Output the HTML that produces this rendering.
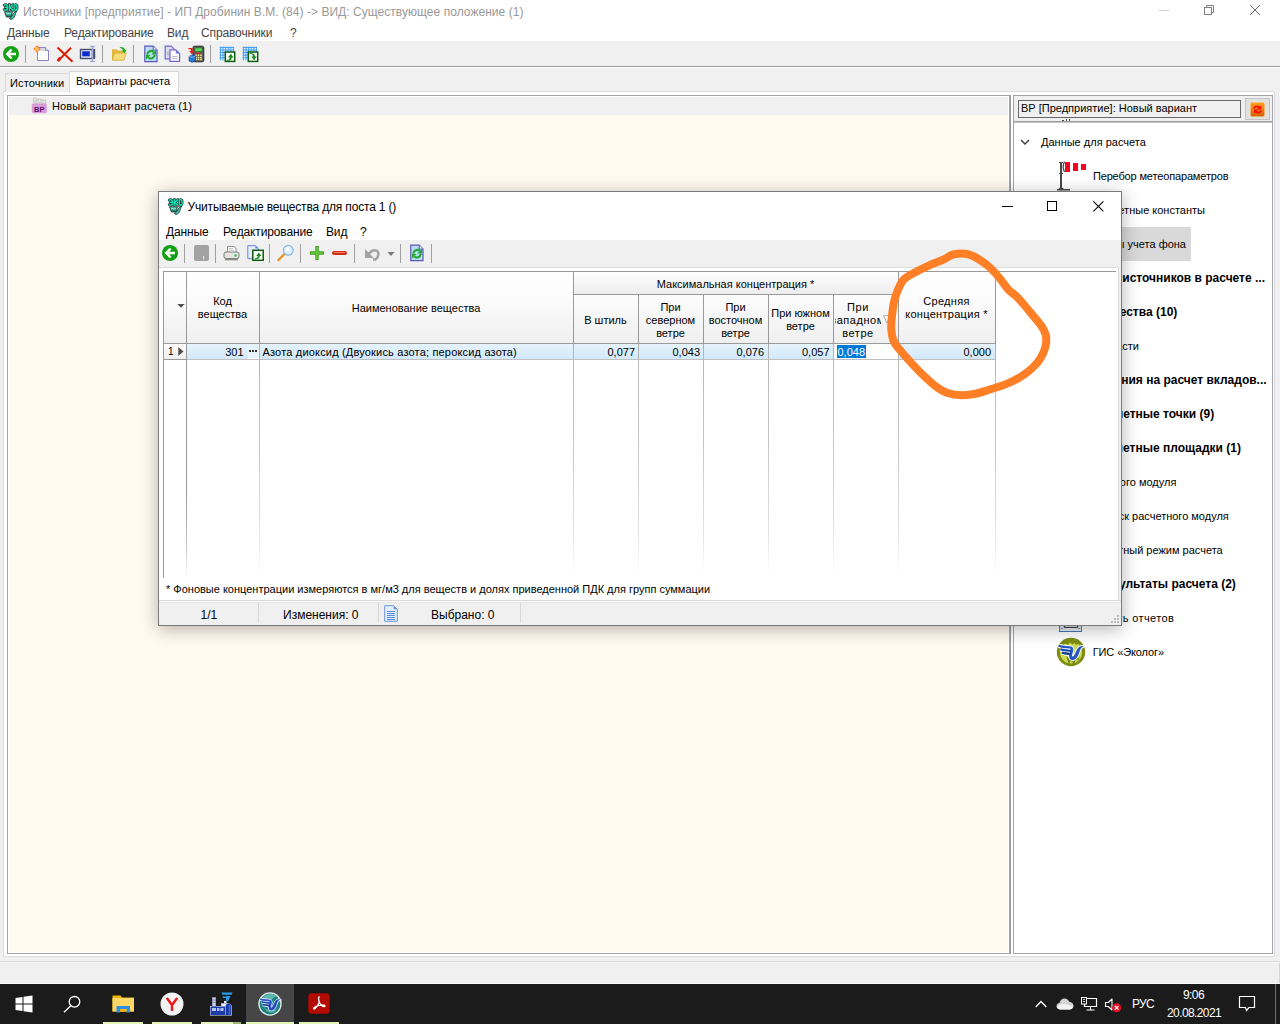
<!DOCTYPE html>
<html><head><meta charset="utf-8">
<style>
html,body{margin:0;padding:0}
body{width:1280px;height:1024px;position:relative;overflow:hidden;background:#f0f0f0;font-family:"Liberation Sans",sans-serif;font-size:11px;color:#000}
.a{position:absolute}
.t{position:absolute;white-space:nowrap;line-height:14px}
.sep{position:absolute;width:1px;background:#a0a0a0}
.b{font-weight:bold;font-size:12px}
</style></head><body>

<!-- ===== main window title + menu ===== -->
<div class="a" id="titlebar" style="left:0;top:0;width:1280px;height:41px;background:#fff"></div>
<div class="t" id="mt" style="letter-spacing:.04px;left:23px;top:4px;font-size:12px;line-height:16px;color:#999">Источники [предприятие] - ИП Дробинин В.М. (84) -&gt; ВИД: Существующее положение (1)</div>
<div class="t" id="mm1" style="letter-spacing:-.13px;left:7px;top:25px;font-size:12px;line-height:16px;color:#444">Данные</div>
<div class="t" id="mm2" style="letter-spacing:-.13px;left:64px;top:25px;font-size:12px;line-height:16px;color:#444">Редактирование</div>
<div class="t" id="mm3" style="letter-spacing:-.13px;left:167px;top:25px;font-size:12px;line-height:16px;color:#444">Вид</div>
<div class="t" id="mm4" style="letter-spacing:-.13px;left:201px;top:25px;font-size:12px;line-height:16px;color:#444">Справочники</div>
<div class="t" id="mm5" style="left:290px;top:25px;font-size:12px;line-height:16px;color:#444">?</div>


<!-- app icon -->
<svg class="a" id="appicon" style="left:2px;top:3px;overflow:visible" width="16" height="16" viewBox="0 0 16 16">
<defs><linearGradient id="cupg" x1="0" y1="0" x2="0" y2="1"><stop offset="0" stop-color="#58e4c8"/><stop offset="1" stop-color="#10705c"/></linearGradient></defs>
<path d="M2.600 8.800h7.800l-1.400 5.200H4.400z" fill="url(#cupg)" stroke="#24302e" stroke-width=".9" stroke-linejoin="round"/><path d="M4 10.700h4.800" stroke="#b8fcec" stroke-width=".7"/>
<path d="M7.400 15.400c3.200-.4 3-6 7.200-7.400-1.400 2.400-1.600 7.800-5.600 8.400z" fill="#30d4b0" stroke="#24302e" stroke-width=".9" stroke-linejoin="round"/>
<g fill="none" stroke-linecap="round" stroke-linejoin="round"><path d="M2.200 2.300C3.400 1 5.600 1.600 5.600 4.400 5.600 7.200 3.400 7.800 2.200 6.500M3.600 4.400H5.600M7.400 1.500V7.300M10.800 1.500L7.800 4.400 10.900 7.300" stroke="#24302e" stroke-width="2.800"/><ellipse cx="13.600" cy="4.400" rx="1.500" ry="2.800" stroke="#24302e" stroke-width="2.800"/><path d="M2.200 2.300C3.400 1 5.600 1.600 5.600 4.400 5.600 7.200 3.400 7.800 2.200 6.500M3.600 4.400H5.600M7.400 1.500V7.300M10.800 1.500L7.800 4.400 10.900 7.300" stroke="#14e8b8" stroke-width="1.350"/><ellipse cx="13.600" cy="4.400" rx="1.500" ry="2.800" stroke="#14e8b8" stroke-width="1.350"/></g>
</svg>
<!-- window controls -->
<div class="a" style="left:1159px;top:10px;width:10px;height:1px;background:#d4d4d4"></div>
<svg class="a" style="left:1203px;top:4px" width="12" height="12" viewBox="0 0 12 12" fill="none" stroke="#808080" stroke-width="1"><rect x="1.5" y="3.5" width="7" height="7"/><path d="M3.5 3.5v-2h7v7h-2"/></svg>
<svg class="a" style="left:1249px;top:4px" width="12" height="12" viewBox="0 0 12 12" fill="none" stroke="#6a6a6a" stroke-width="1"><path d="M1 1l10 10M11 1L1 11"/></svg>

<!-- toolbar separators -->
<div class="sep" style="left:25px;top:45px;height:18px"></div>
<div class="sep" style="left:102px;top:45px;height:18px"></div>
<div class="sep" style="left:133px;top:45px;height:18px"></div>
<div class="sep" style="left:210px;top:45px;height:18px"></div>

<!-- back -->
<svg class="a" style="left:3px;top:46px" width="16" height="16" viewBox="0 0 16 16"><circle cx="8" cy="8" r="8" fill="#14a014"/><path d="M8.6 3.6L4.2 8l4.4 4.4M4.6 8H13" fill="none" stroke="#fff" stroke-width="2.3"/></svg>
<!-- new doc -->
<svg class="a" style="left:33px;top:45px" width="17" height="17" viewBox="0 0 17 17"><path d="M4.5 2.5h8l3 3v10h-11z" fill="#fff" stroke="#8a86c8"/><path d="M5 3h7.4v3H5z" fill="#d8d8e0"/><path d="M12.5 2.5v3h3" fill="#eef" stroke="#8a86c8"/><path d="M4 .8v6.4M.8 4h6.4" stroke="#ff8a1c" stroke-width="2.6"/><path d="M4 2v4M2 4h4" stroke="#ffd9a8" stroke-width=".9"/></svg>
<!-- red X -->
<svg class="a" style="left:56px;top:46px" width="18" height="17" viewBox="0 0 18 17"><path d="M1.5 1.5L16.5 15.8M15 1.8L2.2 14.6" stroke="#e01c00" stroke-width="2" fill="none"/><path d="M4.4 11.6L1.8 15.2" stroke="#e01c00" stroke-width="3"/></svg>
<!-- rename -->
<svg class="a" style="left:79px;top:45px" width="18" height="18" viewBox="0 0 18 18"><rect x="1.5" y="4.5" width="12" height="9" fill="#dfe3ee" stroke="#44506e" stroke-width="1.4"/><rect x="3.2" y="6.3" width="7.6" height="5" fill="#0a2ccc"/><rect x="13.6" y="4" width="2.6" height="10" fill="#49506a"/><path d="M11.2 1.4h1.6l.7 1 .7-1h1.6M13.5 2v14M11.2 16.6h1.6l.7-1 .7 1h1.6" fill="none" stroke="#a0a6d8" stroke-width="1.5"/></svg>
<!-- folder open -->
<svg class="a" style="left:111px;top:46px" width="17" height="16" viewBox="0 0 17 16"><path d="M1 3.2h4.6l1.2 1.4h6.4v9.6H1z" fill="#e2b93c"/><path d="M1.2 14.2L3.6 7h11.8l-2.6 7.2z" fill="#f6dd78" stroke="#d0a42c" stroke-width=".7"/><path d="M8.4 1.2c3-.8 5.2.6 5.8 2.8l1.6-.4-2 3.4-3.2-2 1.6-.4C11.6 3 10.200 2 8.4 1.200z" fill="#2aa81e"/></svg>
<!-- refresh doc -->
<svg class="a" style="left:144px;top:45px" width="14" height="18" viewBox="0 0 14 18"><path d="M.8 1.2h8.4l3.8 3.8v11.600H.8z" fill="#b7dcf4" stroke="#5a56b8" stroke-width="1.200"/><path d="M9.2 1.2v3.8h3.800" fill="#e8f4ff" stroke="#5a56b8"/><path d="M3.300 9.600A3.900 3.900 0 0 1 9.800 6.900" stroke="#1fa82c" stroke-width="2.100" fill="none"/><path d="M12 4.800v4.600H7.400z" fill="#1fa82c"/><path d="M10.700 9.800A3.900 3.900 0 0 1 4.200 12.500" stroke="#1fa82c" stroke-width="2.100" fill="none"/><path d="M2 14.600V10h4.600z" fill="#1fa82c"/></svg>
<!-- copy docs -->
<svg class="a" style="left:164px;top:45px" width="17" height="18" viewBox="0 0 17 18"><path d="M1.200 1.200h6l3 3v9.600h-9z" fill="#dcdcf4" stroke="#6e66c8" stroke-width="1.200"/><path d="M6 4.800h5.800l3.800 3.800v7.800H6z" fill="#fdfdff" stroke="#6e66c8" stroke-width="1.200"/><path d="M11.800 4.800v3.800h3.800z" fill="#7a72d0"/><path d="M8 11.500h5.600M8 13.500h5.600" stroke="#b4b4c4" stroke-width=".9"/><path d="M3 7.600h2M3 9.600h2" stroke="#9a9aaa" stroke-width=".9"/></svg>
<!-- calculator -->
<svg class="a" style="left:188px;top:45px" width="17" height="18" viewBox="0 0 17 18"><rect x="5" y="1.2" width="10.800" height="15.600" rx="1.600" fill="#5c5c5c" stroke="#2c2c2c"/><rect x="7" y="3" width="7" height="3.400" fill="#58dc5c" stroke="#1c7c1c" stroke-width=".6"/><path d="M7 8.400h7" stroke="#e02020" stroke-width="1.200" stroke-dasharray="2 .8"/><path d="M7.200 10.200h6.600M7.200 12.400h6.600M7.200 14.600h6.600" stroke="#f0e48c" stroke-width="1.500" stroke-dasharray="1.700 .75"/><path d="M.4 3h4.200v3h1.600L3.600 9.200 1.200 6h1.600V4.200H.4z" fill="#f01818"/><path d="M1 11.400l3.600-1.600 3 1v4.800l-3.400 1.800L1 16z" fill="#2a78d4" stroke="#123c8c" stroke-width=".6"/><path d="M1 11.400l3.200 1 3.400-1.600" fill="none" stroke="#9cc8f4" stroke-width=".7"/></svg>
<!-- grid export -->
<svg class="a" style="left:219px;top:46px" width="17" height="17" viewBox="0 0 17 17"><rect x=".8" y=".8" width="14" height="13.600" fill="#e8f4ff"/><path d="M.8 1.400h14M.8 4h14M.8 6.600h14M.8 9.200h14M.8 11.800h14M1.400.8v13.600M4 .8v13.600M6.600.8v13.600M9.200.8v13.600M11.800.8v13.600M14.400.8v13.600" stroke="#3a9cf4" stroke-width="1"/><rect x="6.300" y="6" width="9.400" height="9.400" fill="#fff" stroke="#0c5c0c" stroke-width="1.500"/><path d="M7.800 13.800c2.200 0 3-.8 3-2.400H9l2.800-3.600 2.800 3.600h-1.800c0 2.600-1.600 3.400-5 3.400z" fill="#1c8c1c"/></svg>
<!-- grid import -->
<svg class="a" style="left:242px;top:46px" width="17" height="17" viewBox="0 0 17 17"><rect x=".8" y=".8" width="14" height="13.600" fill="#e8f4ff"/><path d="M.8 1.400h14M.8 4h14M.8 6.600h14M.8 9.200h14M.8 11.800h14M1.400.8v13.600M4 .8v13.600M6.600.8v13.600M9.200.8v13.600M11.800.8v13.600M14.400.8v13.600" stroke="#3a9cf4" stroke-width="1"/><rect x="6.300" y="6" width="9.400" height="9.400" fill="#fff" stroke="#0c5c0c" stroke-width="1.500"/><path d="M7.600 8c2.400 0 3.400.8 3.400 2.600H9.200L12 14.200l2.800-3.600H13c0-2.800-1.800-3.600-5.400-3.600z" fill="#1c8c1c"/></svg>


<!-- toolbar line -->
<div class="a" style="left:0;top:66px;width:1280px;height:1px;background:#a0a0a0"></div>
<div class="a" style="left:0;top:67px;width:1280px;height:1px;background:#fff"></div>

<!-- ===== tabs ===== -->
<div class="a" id="tabpage" style="left:3px;top:91px;width:1272px;height:866px;box-sizing:border-box;border:1px solid #dcdcdc;background:#fff"></div>

<div class="a" style="left:5px;top:73px;width:65px;height:19px;border:1px solid #d9d9d9;border-bottom:none;box-sizing:border-box;background:#f0f0f0"></div>
<div class="a" style="left:69px;top:71px;width:110px;height:22px;border:1px solid #d9d9d9;border-bottom:none;box-sizing:border-box;background:#fff"></div>
<div class="t" id="tab1" style="letter-spacing:.13px;left:10px;top:76px;font-size:11px">Источники</div>
<div class="t" id="tab2" style="left:76px;top:74px;font-size:11px">Варианты расчета</div>

<!-- ===== left panel ===== -->
<div class="a" id="lp" style="left:7px;top:95px;width:1003px;height:859px;box-sizing:border-box;border:1px solid #a3a3ab;background:#fffbf0;box-shadow:inset 0 0 0 1px #fff"></div>
<div class="a" style="left:9px;top:97px;width:999px;height:18px;background:#f0f0f0"></div>
<div class="t" id="tree1" style="letter-spacing:.08px;left:52px;top:99px">Новый вариант расчета (1)</div>

<!-- tree BP icon -->
<svg class="a" style="left:31px;top:97px" width="17" height="17" viewBox="0 0 17 17"><path d="M2.400 1h3v2h1.800V2h3v1.600h1.600V3h3v5h-12.400z" fill="#d8d8d8" stroke="#b8b8b8" stroke-width=".6"/><path d="M3.400 2.400h1.200M8 3.400h1.200M12.600 4.400h1.200" stroke="#fff" stroke-width="1"/><rect x=".8" y="6.600" width="15" height="9.600" rx="1.600" fill="#d89cd8"/><text x="8.300" y="14.600" font-family="Liberation Sans" font-weight="bold" font-size="7.500" text-anchor="middle" fill="#5c0c6c">ВР</text></svg>

<div class="a" style="left:1010px;top:95px;width:1px;height:859px;background:#9c9c9c"></div>
<!-- ===== right panel ===== -->
<div class="a" id="rp" style="left:1013px;top:95px;width:260px;height:859px;box-sizing:border-box;border:1px solid #a3a3ab;background:#fff"></div>
<div class="a" style="left:1014px;top:96px;width:258px;height:25px;background:#f0f0f0"></div><div class="a" style="left:1014px;top:121px;width:258px;height:1px;background:#a0a0a4"></div><div class="a" style="left:1014px;top:122px;width:258px;height:1px;background:#c4c4c8"></div>
<div class="a" style="left:1018px;top:100px;width:223px;height:18px;box-sizing:border-box;border:1px solid #696969;background:#f0f0f0"></div>
<div class="t" id="rpt" style="left:1021px;top:101px">ВР [Предприятие]: Новый вариант</div>


<!-- right panel button -->
<div class="a" style="left:1245px;top:98px;width:25px;height:22px;box-sizing:border-box;border:1px solid #c4c4c4;background:#e1e1e1"></div>
<svg class="a" style="left:1250px;top:102px" width="15" height="15" viewBox="0 0 15 15"><defs><linearGradient id="og" x1="0" y1="0" x2="0" y2="1"><stop offset="0" stop-color="#ffa020"/><stop offset="1" stop-color="#d06000"/></linearGradient></defs><rect x=".3" y=".3" width="14.400" height="14.400" rx="2" fill="url(#og)" stroke="#f8d8a0" stroke-width=".6"/><path d="M3 6.600c.4-3 4.400-4 6.600-2l1.400-1.200v4.200H6.800l1.600-1.500c-1.200-1-3-.6-3.400.5zM12 8.400c-.4 3-4.400 4-6.600 2L4 11.600V7.400h4.200L6.600 8.900c1.200 1 3 .6 3.400-.5z" fill="#ff1010"/></svg>
<!-- cut-off text under field -->
<div class="a" style="left:1062px;top:120px;width:2px;height:1px;background:#444"></div>
<div class="a" style="left:1066px;top:119px;width:1px;height:2px;background:#444"></div>
<div class="a" style="left:1069px;top:119px;width:1px;height:2px;background:#444"></div>
<!-- tree -->
<svg class="a" style="left:1020px;top:139px" width="10" height="7" viewBox="0 0 10 7"><path d="M1 1l4 4 4-4" fill="none" stroke="#404040" stroke-width="1.500"/></svg>
<div class="t" id="rg" style="left:1041px;top:135px">Данные для расчета</div>
<div class="a" style="left:1054px;top:227px;width:137px;height:34px;background:#d9d9d9"></div>
<div class="t" id="ri0" style="letter-spacing:-.15px;right:51.6px;top:169px">Перебор метеопараметров</div>
<div class="t" id="ri1" style="right:75.0px;top:203px">Расчетные константы</div>
<div class="t" id="ri2" style="right:94.0px;top:237px">Посты учета фона</div>
<div class="t b" id="ri3" style="right:15.0px;top:271px">Учет источников в расчете ...</div>
<div class="t b" id="ri4" style="right:102.7px;top:305px">Вещества (10)</div>
<div class="t" id="ri5" style="right:141.0px;top:339px">Области</div>
<div class="t b" id="ri6" style="right:13.4px;top:373px">Задания на расчет вкладов...</div>
<div class="t b" id="ri7" style="right:65.8px;top:407px">Расчетные точки (9)</div>
<div class="t b" id="ri8" style="right:39.1px;top:441px">Расчетные площадки (1)</div>
<div class="t" id="ri9" style="right:103.6px;top:475px">Выбор расчетного модуля</div>
<div class="t" id="ri10" style="right:51.2px;top:509px">Запуск расчетного модуля</div>
<div class="t" id="ri11" style="right:57.3px;top:543px">Пакетный режим расчета</div>
<div class="t b" id="ri12" style="right:44.2px;top:577px">Результаты расчета (2)</div>
<div class="t" id="ri13" style="letter-spacing:.38px;right:105.8px;top:611px">Печать отчетов</div>
<div class="t" id="ri14" style="letter-spacing:-.1px;right:116px;top:645px">ГИС «Эколог»</div>

<!-- windsock -->
<svg class="a" style="left:1056px;top:160px" width="32" height="32" viewBox="0 0 32 32"><rect x="4" y="2" width="2" height="28" fill="#484848"/><rect x="3" y="2" width="4" height="1" fill="#484848"/><rect x="3" y="13" width="4" height="1" fill="#484848"/><path d="M1 30.500h13v-1.500H8l-2-1.500H4l-1.500 1.500H1z" fill="#484848"/><path d="M8.500 1.500c-1.500 3-1.500 7.500 0 10.500" fill="none" stroke="#484848" stroke-width="1.200"/><rect x="9" y="2" width="5" height="10" fill="#ff0022"/><rect x="17" y="3" width="5" height="8" fill="#ff0022"/><rect x="25" y="4" width="5" height="6" fill="#ff0022"/></svg>
<!-- printer fragment -->
<svg class="a" style="left:1059px;top:604px" width="23" height="28" viewBox="0 0 24 28" preserveAspectRatio="none"><rect x=".5" y=".5" width="23" height="27" fill="#e6ebf4" stroke="#4a78b4"/><path d="M5.500 18v5.500h14V18" fill="#d8d8d8" stroke="#3c3c3c" stroke-width="1"/><rect x="16" y="20.500" width="2" height="1" fill="#10a010"/><path d="M2 24.500h2M20 24.500h2" stroke="#6a78c8" stroke-width=".8"/></svg>
<!-- GIS icon -->
<svg class="a" style="left:1056px;top:637px" width="30" height="30" viewBox="0 0 30 30"><circle cx="15" cy="15" r="14.200" fill="#7e8c10"/><circle cx="15" cy="15.500" r="11" fill="#cbd955"/><path d="M5 7.500c3-4.500 8-6 12-5.500 3 .5 6 2 8 5-2-.5-3.500 0-5 1l-1.500-2-2 1.500-2.500-2-2 2.500-2.500-1.500-2 2z" fill="#7e8c10"/><path d="M10 19l3 7 2-2 2.500 2.500 2-4 3 1 1.500-4c-4 3-9 3-14-.5z" fill="#8e9c18"/><path d="M11.500 21l2 5.500M19 22l-1.500 4.500" stroke="#6e7c0c" stroke-width="1.400"/>
<g fill="none" stroke="#fff" stroke-width="4.300"><path d="M2.800 8.800C7 10.600 12 9.800 16 11"/><path d="M4.400 12.200C8 13.600 11.600 13 15.400 14.200"/><path d="M6 15.600C9 16.800 11.600 16.200 14.600 17.400"/></g>
<path d="M15 9.600C18 10.600 17.600 13.500 16.600 16 15.800 18.200 15.600 19.400 16.800 19.600 19 19.400 20 12 23.400 9.800 25 8.800 26.800 8.800 28 9.600 25.400 10 24.400 12 23.600 14.600 22.400 18.600 20.600 22.600 17.200 23 14.200 23.200 12.600 21 13.400 18z" fill="#2458c8" stroke="#fff" stroke-width="1.800" paint-order="stroke"/>
<g fill="none" stroke-width="2.300"><path d="M2.800 8.800C7 10.600 12 9.800 16 11" stroke="#2458c8"/><path d="M4.400 12.200C8 13.600 11.600 13 15.400 14.200" stroke="#1c4cac"/><path d="M6 15.600C9 16.800 11.600 16.200 14.600 17.400" stroke="#183c8c"/></g></svg>

<!-- ===== status bar ===== -->
<div class="a" style="left:0;top:961px;width:1280px;height:1px;background:#dcdcdc"></div>

<div class="a" style="left:0;top:962px;width:1280px;height:1px;background:#f6f6f6"></div><div class="a" style="left:0;top:983px;width:1280px;height:1px;background:#fbfbfb"></div><div class="a" style="left:1279px;top:963px;width:1px;height:20px;background:#d4d4d4"></div>
<!-- ===== taskbar ===== -->
<div class="a" id="taskbar" style="left:0;top:984px;width:1280px;height:40px;background:#1b1b1b"></div>


<!-- taskbar content -->
<div class="a" style="left:246px;top:984px;width:48px;height:40px;background:#464646"></div>
<div class="a" style="left:103px;top:1022px;width:40px;height:2px;background:#e4f4b4"></div>
<div class="a" style="left:152px;top:1022px;width:40px;height:2px;background:#e4f4b4"></div>
<div class="a" style="left:201px;top:1022px;width:40px;height:2px;background:#e4f4b4"></div>
<div class="a" style="left:233px;top:1022px;width:8px;height:2px;background:#a4b47c"></div>
<div class="a" style="left:246px;top:1022px;width:48px;height:2px;background:#e4f4b4"></div>
<div class="a" style="left:299px;top:1022px;width:40px;height:2px;background:#e4f4b4"></div>
<!-- start -->
<svg class="a" style="left:15px;top:995px" width="18" height="18" viewBox="0 0 18 18"><path d="M.5 3L7.500 2v6.500H.5zM8.500 1.800L17.500.5v8H8.500zM.5 9.500h7V16L.5 15zM8.500 9.500h9v8L8.500 16.200z" fill="#fff"/></svg>
<!-- search -->
<svg class="a" style="left:63px;top:995px" width="19" height="18" viewBox="0 0 19 18"><circle cx="11.500" cy="6.800" r="5.300" fill="none" stroke="#fff" stroke-width="1.300"/><path d="M7.800 10.800L1 17.300" stroke="#fff" stroke-width="1.400"/></svg>
<!-- explorer -->
<svg class="a" style="left:112px;top:994px" width="23" height="19" viewBox="0 0 23 19"><path d="M.5 1.500h8l1.500 2H22v14H.5z" fill="#f4b400"/><path d="M.5 4h21.500v13.500H.5z" fill="#ffd766"/><path d="M4.500 18.500v-6.500h13.500v6.500h-3.500v-3.500h-6.500v3.500z" fill="#2e8ee6"/><rect x="8" y="15" width="6.500" height="2.500" fill="#f4b400"/></svg>
<!-- yandex -->
<svg class="a" style="left:160px;top:992px" width="24" height="24" viewBox="0 0 24 24"><circle cx="12" cy="12" r="11.500" fill="#f2f2f2"/><path d="M6.800 6l5.200 7v6M17.200 6L12 13" fill="none" stroke="#f01414" stroke-width="2.400"/></svg>
<!-- factory -->
<svg class="a" style="left:209px;top:991px" width="25" height="26" viewBox="0 0 25 26"><path d="M1 24.500V15h2.500V7h3v8h5.500v-2.500h3V10h2.500v2.500h2c2 0 3.500 1.500 3.500 3.500v8.500z" fill="#eef0f8"/><rect x="3.300" y="6.500" width="3.400" height="9" fill="#cfd4e6" stroke="#8890b0" stroke-width=".6"/><path d="M3.300 9h3.400M3.300 11.500h3.400" stroke="#6878a8" stroke-width=".8"/><rect x="1.500" y="15.500" width="14.500" height="8.500" fill="#1c3cac"/><rect x="3" y="17" width="4" height="3" fill="#b8c4f0"/><rect x="8" y="17" width="2.500" height="3" fill="#b8c4f0"/><rect x="11.500" y="17" width="3" height="3" fill="#b8c4f0"/><path d="M12.500 15.500v-3h7v3" fill="none" stroke="#aab0cc" stroke-width="1.200"/><path d="M16.500 24V15.500c0-2 1.500-3 3-3s3 1 3 3V24z" fill="#1a3aa8"/><path d="M20.500 14v10" stroke="#4868d8" stroke-width="1.500"/><path d="M12.500 1.500h11l-1 2.200H18l-.6 1.400h4l-2 4.400c-1 1.500-3 1.200-2.800-.5l.6-2H14l-.6-1.400h4.200l.5-1.900h-4.800z" fill="#2a9cf0"/></svg>
<!-- ecolog -->
<svg class="a" style="left:258px;top:992px" width="24" height="24" viewBox="0 0 30 30"><circle cx="15" cy="15" r="14.600" fill="#e4ecec"/><circle cx="15" cy="15" r="13" fill="#1a8080"/><path d="M6 7c3-4 8-5 12-4.500 2.500.5 4.500 1.500 6 3.500-2 0-3.500.5-5 1.500-2 1.500-3 3-4 3-3-1-6-2-9-3.500z" fill="#5cb8ac"/><path d="M8 20c2 4 5 6 8 6s6-2 7.500-5c-4 2.500-10 2.500-15.500-1z" fill="#58b0a4"/>
<g fill="none" stroke="#e8f4f4" stroke-width="4.300"><path d="M2.800 8.800C7 10.600 12 9.800 16 11"/><path d="M4.400 12.200C8 13.600 11.600 13 15.400 14.200"/><path d="M6 15.600C9 16.800 11.600 16.200 14.600 17.400"/></g>
<path d="M15 9.600C18 10.600 17.600 13.500 16.600 16 15.800 18.200 15.600 19.400 16.800 19.600 19 19.400 20 12 23.400 9.800 25 8.800 26.800 8.800 28 9.600 25.400 10 24.400 12 23.600 14.600 22.400 18.600 20.600 22.600 17.200 23 14.200 23.200 12.600 21 13.400 18z" fill="#2448c4" stroke="#e8f4f4" stroke-width="1.800" paint-order="stroke"/>
<g fill="none" stroke-width="2.300"><path d="M2.800 8.800C7 10.600 12 9.800 16 11" stroke="#2c54cc"/><path d="M4.400 12.200C8 13.600 11.600 13 15.400 14.200" stroke="#2448b4"/><path d="M6 15.600C9 16.800 11.600 16.200 14.600 17.400" stroke="#1c3c9c"/></g></svg>
<!-- acrobat -->
<svg class="a" style="left:308px;top:993px" width="22" height="21" viewBox="0 0 22 21"><rect x=".3" y=".3" width="21.400" height="20.400" rx="3.500" fill="#b30b00"/><path d="M11.200 4c-1 0-.8 2.400.2 4.800-.8 2.600-2.600 5.400-4.400 6.800-1.400 1-1.800-.2-.6-1.200 1.800-1.500 6.400-2.600 9.400-2.200 1.600.3 1.600 1.600.2 1.500-2-.3-4.600-3-5.200-6-.4-2-.2-3.700.4-3.700z" fill="none" stroke="#fff" stroke-width="1.300" stroke-linejoin="round"/></svg>
<!-- tray -->
<svg class="a" style="left:1035px;top:1000px" width="12" height="8" viewBox="0 0 12 8"><path d="M.7 7L6 1.500 11.300 7" fill="none" stroke="#fff" stroke-width="1.300"/></svg>
<svg class="a" style="left:1056px;top:998px" width="18" height="12" viewBox="0 0 18 12"><path d="M4.500 11.500c-2.500 0-4-1.500-4-3.300 0-1.700 1.300-3 3-3.200C4 2.500 6 .6 8.500.6c2.200 0 4 1.300 4.700 3.200 2.300.2 4.300 1.700 4.300 3.900 0 2.200-1.700 3.800-4 3.800z" fill="#d4d4d4"/><path d="M1 9c2-2.500 6-3.500 9-2.500 2.500.8 5 1.500 7.300 1.300-.3 2-1.800 3.700-3.800 3.700h-9C2.700 11.500 1.400 10.500 1 9z" fill="#f4f4f4"/></svg>
<svg class="a" style="left:1081px;top:997px" width="17" height="15" viewBox="0 0 17 15"><path d="M3.500 1.500h12v8h-12z" fill="none" stroke="#fff" stroke-width="1.200"/><path d="M9.500 9.500v3M5.500 13h8" stroke="#fff" stroke-width="1.200"/><rect x=".5" y=".5" width="5" height="6.500" fill="#1b1b1b" stroke="#fff" stroke-width="1"/><path d="M2 2.500h2M2 4.500h2" stroke="#fff" stroke-width=".8"/></svg>
<svg class="a" style="left:1104px;top:997px" width="18" height="16" viewBox="0 0 18 16"><path d="M1.500 5.500h2.800L8 2v11L4.300 9.500H1.500z" fill="none" stroke="#fff" stroke-width="1.100" stroke-linejoin="round"/><circle cx="12.600" cy="10.800" r="4.500" fill="#e81123"/><path d="M10.800 9l3.600 3.600M14.400 9l-3.600 3.600" stroke="#fff" stroke-width="1.200"/></svg>
<div class="t" id="lang" style="left:1132px;top:995.5px;letter-spacing:-.7px;font-size:12px;line-height:16px;color:#fff">РУС</div>
<div class="t" id="clk" style="left:1183px;top:987px;letter-spacing:-.6px;font-size:12px;line-height:16px;color:#fff">9:06</div>
<div class="t" id="date" style="left:1167px;top:1005px;font-size:12px;line-height:16px;color:#fff;letter-spacing:-0.6px">20.08.2021</div>
<svg class="a" style="left:1238px;top:995px" width="18" height="17" viewBox="0 0 18 17"><path d="M1.500 1.500h15v11h-5.500l-2.500 3-1-3H1.500z" fill="none" stroke="#fff" stroke-width="1.200" stroke-linejoin="miter"/></svg>
<div class="a" style="left:1275px;top:984px;width:1px;height:40px;background:#6e6e6e"></div>

<!-- ===== dialog ===== -->
<div class="a" id="dlg" style="left:158px;top:191px;width:964px;height:435px;box-sizing:border-box;border:1px solid #7a7a7a;background:#fff;box-shadow:0 3px 17px rgba(0,0,0,.30)"></div>


<!-- dialog title -->
<svg class="a" style="left:167px;top:198px;overflow:visible" width="16" height="16" viewBox="0 0 16 16">
<defs><linearGradient id="cupg2" x1="0" y1="0" x2="0" y2="1"><stop offset="0" stop-color="#58e4c8"/><stop offset="1" stop-color="#10705c"/></linearGradient></defs>
<path d="M2.600 8.800h7.800l-1.400 5.200H4.400z" fill="url(#cupg2)" stroke="#24302e" stroke-width=".9" stroke-linejoin="round"/><path d="M4 10.700h4.800" stroke="#b8fcec" stroke-width=".7"/>
<path d="M7.400 15.400c3.200-.4 3-6 7.200-7.400-1.400 2.400-1.600 7.800-5.600 8.400z" fill="#30d4b0" stroke="#24302e" stroke-width=".9" stroke-linejoin="round"/>
<g fill="none" stroke-linecap="round" stroke-linejoin="round"><path d="M2.200 2.300C3.400 1 5.600 1.600 5.600 4.400 5.600 7.200 3.400 7.800 2.200 6.500M3.600 4.400H5.600M7.400 1.500V7.300M10.800 1.500L7.800 4.400 10.900 7.300" stroke="#24302e" stroke-width="2.800"/><ellipse cx="13.600" cy="4.400" rx="1.500" ry="2.800" stroke="#24302e" stroke-width="2.800"/><path d="M2.200 2.300C3.400 1 5.600 1.600 5.600 4.400 5.600 7.200 3.400 7.800 2.200 6.500M3.600 4.400H5.600M7.400 1.500V7.300M10.800 1.500L7.800 4.400 10.900 7.300" stroke="#14e8b8" stroke-width="1.350"/><ellipse cx="13.600" cy="4.400" rx="1.500" ry="2.800" stroke="#14e8b8" stroke-width="1.350"/></g>
</svg>
<div class="t" id="dt" style="letter-spacing:-.17px;left:187.500px;top:198.500px;font-size:12px;line-height:16px">Учитываемые вещества для поста 1 ()</div>
<div class="a" style="left:1002px;top:206px;width:11px;height:1px;background:#000"></div>
<div class="a" style="left:1047px;top:201px;width:10px;height:10px;box-sizing:border-box;border:1px solid #000"></div>
<svg class="a" style="left:1093px;top:201px" width="11" height="11" viewBox="0 0 11 11"><path d="M.4 .4l10 10M10.400 .4l-10 10" stroke="#000" stroke-width="1.100" fill="none"/></svg>
<!-- dialog menu -->
<div class="t" id="dm1" style="letter-spacing:-.13px;left:166px;top:223.500px;font-size:12px;line-height:16px">Данные</div>
<div class="t" id="dm2" style="letter-spacing:-.13px;left:223px;top:223.500px;font-size:12px;line-height:16px">Редактирование</div>
<div class="t" id="dm3" style="letter-spacing:-.13px;left:326px;top:223.500px;font-size:12px;line-height:16px">Вид</div>
<div class="t" id="dm4" style="left:360px;top:223.500px;font-size:12px;line-height:16px">?</div>
<!-- dialog toolbar -->
<div class="a" style="left:159px;top:240px;width:962px;height:27px;background:#f0f0f0"></div>
<div class="a" style="left:159px;top:267px;width:962px;height:1px;background:#dcdcdc"></div>
<div class="sep" style="left:184px;top:244px;height:19px"></div>
<div class="sep" style="left:215px;top:244px;height:19px"></div>
<div class="sep" style="left:269px;top:244px;height:19px"></div>
<div class="sep" style="left:300px;top:244px;height:19px"></div>
<div class="sep" style="left:354px;top:244px;height:19px"></div>
<div class="sep" style="left:400px;top:244px;height:19px"></div>
<div class="sep" style="left:431px;top:244px;height:19px"></div>
<svg class="a" style="left:162px;top:245px" width="16" height="16" viewBox="0 0 16 16"><circle cx="8" cy="8" r="8" fill="#14a014"/><path d="M8.600 3.600L4.200 8l4.400 4.400M4.600 8H13" fill="none" stroke="#fff" stroke-width="2.300"/></svg>
<svg class="a" style="left:194px;top:245px" width="15" height="16" viewBox="0 0 15 16"><rect x="0" y="0" width="15" height="16" rx="2" fill="#a2a2a2"/><rect x="9" y="11" width="1.200" height="3.500" fill="#dcdcdc"/></svg>
<!-- printer -->
<svg class="a" style="left:223px;top:245px" width="17" height="16" viewBox="0 0 17 16"><path d="M4.500 7V1.500h6.500l2 1.800V7" fill="#fff" stroke="#8c8c8c"/><path d="M6 3.500h4M6 5.200h5" stroke="#b4b4b4" stroke-width=".8"/><rect x="1" y="7" width="15" height="6.500" rx="2" fill="#e4e4e4" stroke="#7c7c7c"/><rect x="11.500" y="9.500" width="2" height="2" fill="#10c010"/><path d="M2 14.500h13" stroke="#8c8c8c" stroke-width="1.600"/></svg>
<!-- export doc -->
<svg class="a" style="left:247px;top:245px" width="17" height="16" viewBox="0 0 17 16"><path d="M.8 .600h7.600l3 3v10H.8z" fill="#e4ecfc" stroke="#6c84d4"/><path d="M8.400 .600v3h3z" fill="#6c84d4"/><rect x="5.800" y="5.300" width="10.400" height="10" fill="#fff" stroke="#0c5c0c" stroke-width="1.500"/><path d="M7.800 13.200c2.200 0 3-.8 3-2.200H9.200l2.600-3.400 2.600 3.400h-1.600c0 2.400-1.600 3.200-5 3.200z" fill="#1c8c1c"/></svg>
<!-- magnifier -->
<svg class="a" style="left:277px;top:244px" width="18" height="18" viewBox="0 0 18 18"><path d="M1.500 16L8 9.500" stroke="#e8962c" stroke-width="2.400" stroke-linecap="round"/><circle cx="11.300" cy="6.300" r="4.900" fill="#dcf0ff" stroke="#8cb4dc" stroke-width="1.200"/><circle cx="10.300" cy="5.300" r="2" fill="#fff"/></svg>
<!-- plus / minus -->
<svg class="a" style="left:310px;top:246px" width="14" height="14" viewBox="0 0 14 14"><path d="M7 .8v12.400M.8 7h12.400" stroke="#3ca41c" stroke-width="3.400" stroke-linecap="round"/><path d="M7 1.500v11M1.500 7h11" stroke="#7cd44c" stroke-width="1.200" stroke-linecap="round"/></svg>
<svg class="a" style="left:332px;top:250px" width="15" height="6" viewBox="0 0 15 6"><path d="M2 3h11" stroke="#d42c14" stroke-width="4" stroke-linecap="round"/><path d="M2.500 2.500h10" stroke="#f4846c" stroke-width="1.200" stroke-linecap="round"/></svg>
<!-- undo -->
<svg class="a" style="left:364px;top:247px" width="17" height="15" viewBox="0 0 17 15"><path d="M1 2.100V10.900H9.800Z" fill="#a2a2a2"/><path d="M4.400 7L8.200 3.600H12.400Q14.600 4.400 14.400 7.400 14 11 11.600 12.400L9 12.500" fill="none" stroke="#a2a2a2" stroke-width="2.500" stroke-linejoin="round"/></svg>
<svg class="a" style="left:386.5px;top:252px" width="8" height="4" viewBox="0 0 8 4"><path d="M.3 0h7.400L4 4z" fill="#7c7c7c"/></svg>
<!-- refresh doc -->
<svg class="a" style="left:410px;top:244px" width="14" height="18" viewBox="0 0 14 18"><path d="M.8 1.200h8.400l3.800 3.800v11.600H.8z" fill="#b7dcf4" stroke="#5a56b8" stroke-width="1.200"/><path d="M9.200 1.200v3.800h3.800" fill="#e8f4ff" stroke="#5a56b8"/><path d="M3.300 9.600A3.900 3.900 0 0 1 9.800 6.900" stroke="#1fa82c" stroke-width="2.100" fill="none"/><path d="M12 4.800v4.600H7.400z" fill="#1fa82c"/><path d="M10.700 9.800A3.900 3.900 0 0 1 4.200 12.500" stroke="#1fa82c" stroke-width="2.100" fill="none"/><path d="M2 14.600V10h4.600z" fill="#1fa82c"/></svg>

<!-- grid -->
<div class="a" id="ghead" style="left:164px;top:272px;width:831px;height:71px;background:linear-gradient(#fff,#fbfbfb 40%,#efefef)"></div>
<div class="a" style="left:574px;top:272px;width:324px;height:22px;background:linear-gradient(#fff,#ededed)"></div>
<div class="a" style="left:163px;top:271px;width:953px;height:1px;background:#9a9a9a"></div><div class="a" style="left:1118px;top:267px;width:1px;height:334px;background:#dcdcdc"></div><div class="a" style="left:1119px;top:267px;width:2px;height:334px;background:#f0f0f0"></div>
<div class="a" style="left:163px;top:343px;width:833px;height:1px;background:#9a9a9a"></div>
<div class="a" style="left:573px;top:294px;width:326px;height:1px;background:#9a9a9a"></div>
<!-- row -->
<div class="a" style="left:164px;top:344px;width:22px;height:15px;background:linear-gradient(#fdfdfd,#efefef)"></div>
<div class="a" style="left:187px;top:344px;width:808px;height:15px;background:linear-gradient(#e6f3fc,#d2e9fb)"></div>
<div class="a" style="left:247px;top:344px;width:12px;height:14px;background:#e8f4fd"></div><div class="a" style="left:247px;top:358px;width:12px;height:1px;background:#fff"></div>
<div class="a" style="left:834px;top:344px;width:64px;height:15px;background:#fff"></div>
<div class="a" style="left:837px;top:345px;width:29px;height:13px;background:#0078d7"></div>
<div class="a" style="left:163px;top:359px;width:833px;height:1px;background:#c0c0c0"></div><div class="a" style="left:163px;top:359px;width:24px;height:1px;background:#9a9a9a"></div>
<div class="a" style="left:163px;top:271px;width:1px;height:73px;background:#9a9a9a"></div>
<div class="a" style="left:186px;top:271px;width:1px;height:73px;background:#9a9a9a"></div>
<div class="a" style="left:259px;top:271px;width:1px;height:73px;background:#9a9a9a"></div>
<div class="a" style="left:573px;top:271px;width:1px;height:73px;background:#9a9a9a"></div>
<div class="a" style="left:638px;top:294px;width:1px;height:50px;background:#9a9a9a"></div>
<div class="a" style="left:703px;top:294px;width:1px;height:50px;background:#9a9a9a"></div>
<div class="a" style="left:768px;top:294px;width:1px;height:50px;background:#9a9a9a"></div>
<div class="a" style="left:833px;top:294px;width:1px;height:50px;background:#9a9a9a"></div>
<div class="a" style="left:898px;top:271px;width:1px;height:73px;background:#9a9a9a"></div>
<div class="a" style="left:995px;top:271px;width:1px;height:73px;background:#9a9a9a"></div>
<div class="a" style="left:163px;top:344px;width:1px;height:234px;background:#9a9a9a"></div>
<div class="a" style="left:186px;top:344px;width:1px;height:234px;background:linear-gradient(#9a9a9a 0,#9a9a9a 150px,#c8c8c8 205px,#fff 234px)"></div>
<div class="a" style="left:259px;top:344px;width:1px;height:234px;background:linear-gradient(#adadad 0,#b8b8b8 16px,#c6c6c6 100px,#e4e4e4 190px,#fff 232px)"></div>
<div class="a" style="left:573px;top:344px;width:1px;height:234px;background:linear-gradient(#adadad 0,#b8b8b8 16px,#c6c6c6 100px,#e4e4e4 190px,#fff 232px)"></div>
<div class="a" style="left:638px;top:344px;width:1px;height:234px;background:linear-gradient(#adadad 0,#b8b8b8 16px,#c6c6c6 100px,#e4e4e4 190px,#fff 232px)"></div>
<div class="a" style="left:703px;top:344px;width:1px;height:234px;background:linear-gradient(#adadad 0,#b8b8b8 16px,#c6c6c6 100px,#e4e4e4 190px,#fff 232px)"></div>
<div class="a" style="left:768px;top:344px;width:1px;height:234px;background:linear-gradient(#adadad 0,#b8b8b8 16px,#c6c6c6 100px,#e4e4e4 190px,#fff 232px)"></div>
<div class="a" style="left:833px;top:344px;width:1px;height:234px;background:linear-gradient(#adadad 0,#b8b8b8 16px,#c6c6c6 100px,#e4e4e4 190px,#fff 232px)"></div>
<div class="a" style="left:898px;top:344px;width:1px;height:234px;background:linear-gradient(#adadad 0,#b8b8b8 16px,#c6c6c6 100px,#e4e4e4 190px,#fff 232px)"></div>
<div class="a" style="left:995px;top:344px;width:1px;height:234px;background:linear-gradient(#adadad 0,#b8b8b8 16px,#c6c6c6 100px,#e4e4e4 190px,#fff 232px)"></div>

<!-- header texts -->
<svg class="a" style="left:177px;top:304px" width="8" height="4" viewBox="0 0 8 4"><path d="M.3 0h7.400L4 3.800z" fill="#505050"/></svg>
<div class="t" id="h1" style="left:186px;width:73px;top:295px;text-align:center;line-height:13px">Код<br>вещества</div>
<div class="t" id="h2" style="left:259px;width:314px;top:302px;text-align:center;line-height:13px">Наименование вещества</div>
<div class="t" id="h3" style="left:573px;width:325px;top:278px;text-align:center;line-height:13px">Максимальная концентрация *</div>
<div class="t" id="h4" style="left:573px;width:65px;top:314px;text-align:center;line-height:13px">В штиль</div>
<div class="t" id="h5" style="left:638px;width:65px;top:301px;text-align:center;line-height:13px">При<br>северном<br>ветре</div>
<div class="t" id="h6" style="left:703px;width:65px;top:301px;text-align:center;line-height:13px">При<br>восточном<br>ветре</div>
<div class="t" id="h7" style="left:768px;width:65px;top:307px;text-align:center;line-height:13px">При южном<br>ветре</div>
<div class="a" style="left:835px;top:295px;width:46px;height:48px;overflow:hidden"><div class="t" id="h8" style="left:-12px;width:70px;top:6px;letter-spacing:.55px;text-align:center;line-height:13px">При<br>западном<br>ветре</div></div>
<svg class="a" style="left:883px;top:315px" width="8" height="9" viewBox="0 0 8 9"><path d="M.5 .500h7L4 8z" fill="#f8f8f8" stroke="#9c9c9c" stroke-width=".8"/></svg>
<div class="t" id="h9" style="letter-spacing:.3px;left:898px;width:97px;top:295px;text-align:center;line-height:13px">Средняя<br>концентрация *</div>
<!-- row texts -->
<div class="t" id="r0" style="left:168px;top:345px;font-size:10px">1</div>
<svg class="a" style="left:178px;top:347px" width="6" height="9" viewBox="0 0 6 9"><path d="M.3 0v9L5.500 4.500z" fill="#505050"/></svg>
<div class="t" id="r1" style="right:1036.500px;top:345px">301</div>
<div class="a" style="left:249px;top:350px;width:2px;height:2px;background:#303030"></div>
<div class="a" style="left:252px;top:350px;width:2px;height:2px;background:#303030"></div>
<div class="a" style="left:255px;top:350px;width:2px;height:2px;background:#303030"></div>
<div class="t" id="r2" style="letter-spacing:.18px;left:262.500px;top:345px">Азота диоксид (Двуокись азота; пероксид азота)</div>
<div class="t" id="r3" style="right:645px;top:345px">0,077</div>
<div class="t" id="r4" style="right:580px;top:345px">0,043</div>
<div class="t" id="r5" style="right:516px;top:345px">0,076</div>
<div class="t" id="r6" style="right:450.500px;top:345px">0,057</div>
<div class="t" id="r7" style="left:837.500px;top:345px;color:#fff">0,048</div>
<div class="t" id="r8" style="right:289px;top:345px">0,000</div>
<!-- footnote + status -->
<div class="t" id="fn" style="left:166px;top:581.500px">* Фоновые концентрации измеряются в мг/м3 для веществ и долях приведенной ПДК для групп суммации</div>
<div class="a" style="left:159px;top:600px;width:962px;height:1px;background:#dadada"></div>
<div class="a" style="left:159px;top:601px;width:962px;height:24px;background:#f0f0f0"></div><div class="a" style="left:159px;top:601px;width:962px;height:1px;background:#f8f8f8"></div><div class="a" style="left:159px;top:602px;width:962px;height:1px;background:#e6e6e6"></div>
<div class="a" style="left:258px;top:603px;width:1px;height:20px;background:#d7d7d7"></div>
<div class="a" style="left:378px;top:603px;width:1px;height:20px;background:#d7d7d7"></div>
<div class="a" style="left:520px;top:603px;width:1px;height:20px;background:#d7d7d7"></div>
<div class="t" id="s1" style="left:200.500px;top:607px;font-size:12px;line-height:16px">1/1</div>
<div class="t" id="s2" style="left:283px;top:607px;font-size:12px;line-height:16px">Изменения: 0</div>
<div class="t" id="s3" style="left:431px;top:607px;font-size:12px;line-height:16px">Выбрано: 0</div>
<svg class="a" style="left:384px;top:605px" width="14" height="17" viewBox="0 0 14 17"><path d="M.7 .700h9l3.600 3.600v12H.7z" fill="#e4f0fc" stroke="#6c94dc"/><path d="M9.700 .700v3.600h3.600z" fill="#6c94dc"/><path d="M3 6.500h8M3 8.500h8M3 10.500h8M3 12.500h8M3 14.500h8" stroke="#5c88dc" stroke-width="1"/></svg>
<svg class="a" style="left:1108px;top:614px" width="12" height="12" viewBox="0 0 12 12" fill="#bcbcbc"><rect x="9" y="1" width="2" height="2"/><rect x="6" y="4" width="2" height="2"/><rect x="9" y="4" width="2" height="2"/><rect x="3" y="7" width="2" height="2"/><rect x="6" y="7" width="2" height="2"/><rect x="9" y="7" width="2" height="2"/><rect x="0" y="10" width="2" height="2" opacity="0"/></svg>

<!-- orange marker -->
<svg class="a" style="left:0;top:0" width="1280" height="1024" viewBox="0 0 1280 1024"><path d="M953.1 254.5C957.1 253.6 963.0 253.2 967.2 254.0C971.4 254.8 974.6 256.8 978.4 259.0C982.1 261.2 986.2 264.2 989.7 267.4C993.2 270.6 996.5 274.4 999.5 278.0C1002.5 281.6 1005.0 285.9 1008.0 289.2C1011.0 292.5 1014.8 294.6 1017.8 297.7C1020.8 300.8 1023.5 304.2 1026.3 307.5C1029.1 310.8 1032.1 314.5 1034.7 317.6C1037.3 320.7 1039.8 323.2 1041.7 326.3C1043.6 329.4 1045.4 332.5 1046.0 336.0C1046.6 339.5 1046.2 343.5 1045.3 347.3C1044.3 351.1 1042.5 355.1 1040.3 358.6C1038.1 362.1 1035.2 365.3 1031.9 368.4C1028.6 371.4 1024.8 374.3 1020.6 376.9C1016.4 379.5 1011.8 381.8 1006.6 383.9C1001.5 386.0 994.9 387.9 989.7 389.5C984.5 391.1 980.3 392.9 975.6 393.8C970.9 394.8 966.3 395.3 961.6 395.2C956.9 395.1 951.7 394.4 947.5 393.0C943.3 391.6 940.0 389.4 936.3 386.7C932.5 384.0 928.8 380.4 925.0 376.9C921.2 373.4 917.5 369.6 913.8 365.6C910.0 361.6 905.8 357.0 902.5 353.0C899.2 349.0 895.9 345.7 894.0 341.7C892.1 337.7 891.6 333.3 891.3 329.0C891.0 324.7 891.5 320.5 892.0 316.0C892.5 311.5 893.0 306.4 894.0 301.9C895.0 297.4 896.6 292.9 898.3 289.2C899.9 285.4 901.1 282.2 903.9 279.4C906.7 276.6 911.0 274.6 915.2 272.3C919.4 270.0 924.5 267.4 929.2 265.3C933.9 263.2 939.3 261.5 943.3 259.7C947.3 257.9 949.1 255.4 953.1 254.5Z" fill="none" stroke="#ff7f27" stroke-width="8" stroke-linejoin="round" stroke-linecap="round"/></svg>

</body></html>
